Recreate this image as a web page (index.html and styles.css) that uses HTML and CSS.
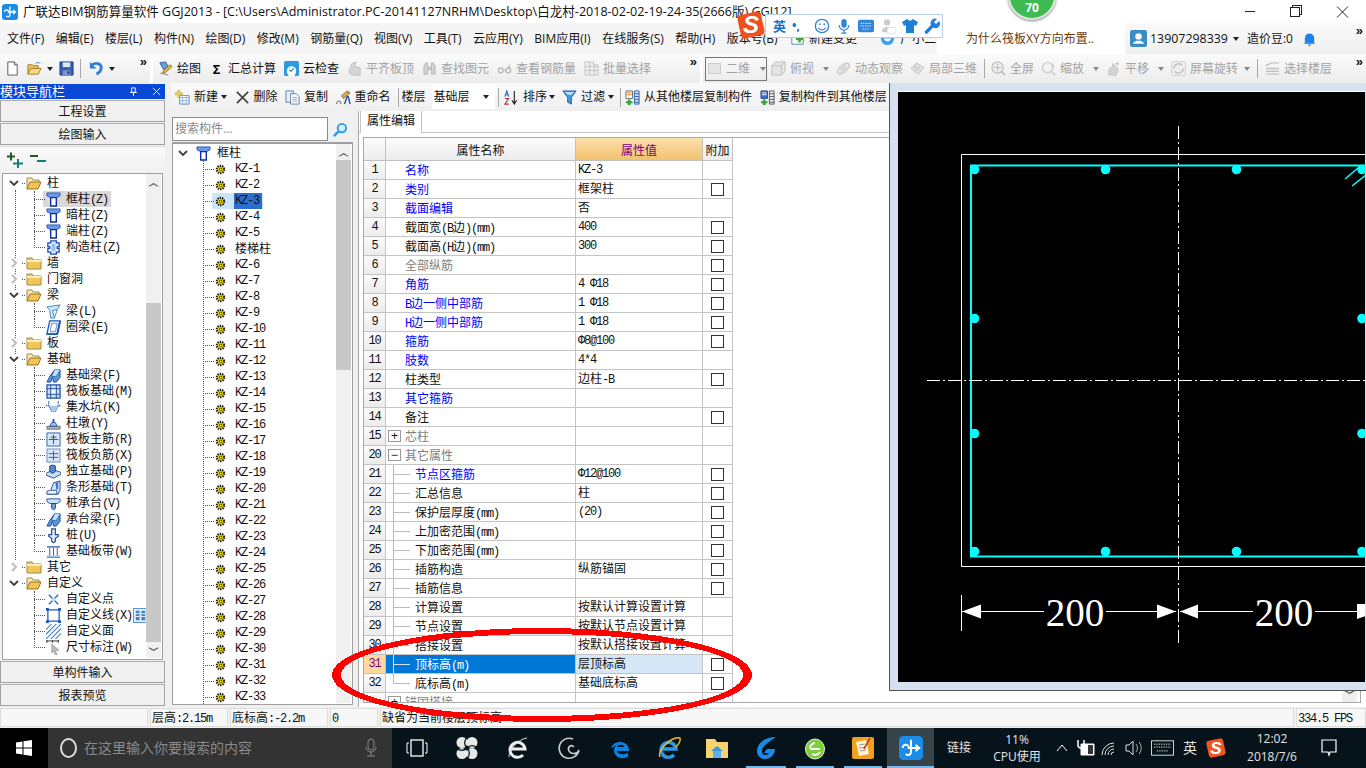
FILE: index.html
```html
<!DOCTYPE html>
<html lang="zh-CN">
<head>
<meta charset="utf-8">
<title>广联达BIM钢筋算量软件</title>
<link rel="stylesheet" href="styles.css">
</head>
<body>
<svg class="defs" width="0" height="0">
<defs>
<symbol id="logo" viewBox="0 0 16 16"><rect width="16" height="16" rx="3" fill="#1b8de8"/><path d="M8 2.500v8.500a2 2 0 0 1-3.500 1M2.500 8a2 2 0 0 1 2-2.200a2 2 0 0 1 2 2.200h6.500M11 6l2.500 2-2.500 2" fill="none" stroke="#fff" stroke-width="1.300"/></symbol>
<symbol id="doc" viewBox="0 0 16 16"><path d="M3 1h7l3 3v11H3z" fill="#fff" stroke="#555"/><path d="M10 1v3h3" fill="#ddd" stroke="#555"/></symbol>
<symbol id="open" viewBox="0 0 16 16"><path d="M1 14V4h5l1 1h5v3" fill="#e8c265" stroke="#a67c20"/><path d="M1 14l3-6h11l-3 6z" fill="#f6d98a" stroke="#a67c20"/><path d="M9 3c2-2 4-2 5 0" fill="none" stroke="#3a7bd5"/></symbol>
<symbol id="save" viewBox="0 0 16 16"><path d="M1 1h14v14H1z" fill="#3a5fb0" stroke="#23407f"/><path d="M4 1.500h8v5H4z" fill="#dfe8f6"/><path d="M4 10h8v5H4z" fill="#7f96c8"/><path d="M9 11h2v3H9z" fill="#23407f"/></symbol>
<symbol id="undo" viewBox="0 0 16 16"><path d="M3 4c5-3 11-1 10 4-.5 3-3 5-5 6" fill="none" stroke="#2f7fd6" stroke-width="3"/><path d="M1 1v7h7z" fill="#2f7fd6"/></symbol>
<symbol id="draw" viewBox="0 0 16 16"><path d="M2 2l6-1 3 5-5 3z" fill="#6aa0e0" stroke="#2b5ca8"/><path d="M6 10l7-6 2 2-7 6-3 1z" fill="#f0c040" stroke="#8a6a10"/><path d="M2 13l9 2" stroke="#888"/></symbol>
<symbol id="cloud" viewBox="0 0 16 16"><rect width="16" height="16" rx="2" fill="#2d9ae0"/><path d="M3 10a5 4.500 0 0 1 10 0 2 3 0 0 1-10 0" fill="#fff"/><path d="M5.500 9.500l2 1.500 3-3" fill="none" stroke="#2d9ae0" stroke-width="1.400"/></symbol>
<symbol id="g1" viewBox="0 0 16 16"><path d="M2 12l3-9 5-2-2 5 6 1v8H5z" fill="#d6d6d6" stroke="#bdbdbd"/></symbol>
<symbol id="binoc" viewBox="0 0 16 16"><path d="M2 14V6l2-4h2v12zM10 14V2h2l2 4v8z" fill="#d2d2d2" stroke="#b5b5b5"/><path d="M6 6h4v4H6z" fill="#c0c0c0"/></symbol>
<symbol id="glass" viewBox="0 0 16 16"><circle cx="4" cy="10" r="2.500" fill="none" stroke="#bbb" stroke-width="1.500"/><circle cx="12" cy="10" r="2.500" fill="none" stroke="#bbb" stroke-width="1.500"/><path d="M6.500 10h3M13 8V4" stroke="#bbb" stroke-width="1.500"/></symbol>
<symbol id="batch" viewBox="0 0 16 16"><path d="M1 1h9v3h5v11H1z" fill="#eee" stroke="#c4c4c4"/><path d="M1 6h14M1 10h14M6 1v14M11 4v11" stroke="#c4c4c4"/></symbol>
<symbol id="cube" viewBox="0 0 16 16"><path d="M1 5l4-4h10v10l-4 4H1z" fill="#e6e6e6" stroke="#bdbdbd"/><path d="M1 5h10v10M11 5l4-4" fill="none" stroke="#bdbdbd"/></symbol>
<symbol id="orbit" viewBox="0 0 16 16"><ellipse cx="8" cy="8" rx="7.500" ry="3.500" transform="rotate(-40 8 8)" fill="none" stroke="#cfcfcf" stroke-width="2"/><circle cx="8" cy="8" r="4" fill="#d8d8d8"/></symbol>
<symbol id="part3d" viewBox="0 0 16 16"><path d="M1 8l6-6 8 5-6 7z" fill="#e2e2e2" stroke="#c5c5c5"/><path d="M4 5l8 6M7 2l-3 9M11 5l-5 7" stroke="#c5c5c5" fill="none"/></symbol>
<symbol id="full" viewBox="0 0 16 16"><circle cx="7" cy="7" r="6" fill="#eee" stroke="#c0c0c0" stroke-width="1.400"/><path d="M7 3v8M3 7h8" stroke="#bdbdbd"/><path d="M11.500 11.500l3.500 3.500" stroke="#c0c0c0" stroke-width="2"/></symbol>
<symbol id="zoom" viewBox="0 0 16 16"><circle cx="7" cy="7" r="5.500" fill="#f2f2f2" stroke="#cfcfcf" stroke-width="1.500"/><path d="M11 11l4 4" stroke="#cfcfcf" stroke-width="2"/><path d="M13 3v4" stroke="#bbb"/></symbol>
<symbol id="pan" viewBox="0 0 16 16"><path d="M3 15V9l2-2 2-1V3l2 1v2l3 1 1 3-2 5z" fill="#d3d3d3" stroke="#c4c4c4"/><path d="M12 1v4M10 3h4" stroke="#bbb"/></symbol>
<symbol id="rot" viewBox="0 0 16 16"><rect x=".5" y=".5" width="15" height="15" rx="2" fill="#eee" stroke="#d2d2d2"/><path d="M3 8a5 5 0 0 1 9-3M13 8a5 5 0 0 1-9 3" fill="none" stroke="#c0c0c0" stroke-width="1.500"/></symbol>
<symbol id="layers" viewBox="0 0 16 16"><path d="M1 5l6-3h8M1 8h14M1 11h14M1 14h14" fill="none" stroke="#c4c4c4" stroke-width="1.500"/></symbol>
<symbol id="new" viewBox="0 0 16 16"><path d="M5 6h10v9H5z" fill="#fff" stroke="#6d86a8"/><path d="M5 8h10M8 8v7M12 8v7M5 11.500h10" stroke="#8fb0d8"/><path d="M3 0h2v3h3v2H5v3H3V5H0V3h3z" fill="#e9d85a" stroke="#a89a20" stroke-width=".5"/></symbol>
<symbol id="del" viewBox="0 0 16 16"><path d="M2 2l12 12M14 2L2 14" stroke="#444" stroke-width="1.800"/></symbol>
<symbol id="copy" viewBox="0 0 16 16"><path d="M1 1h8v12H1z" fill="#e8f0fa" stroke="#5a7fb0"/><path d="M6 4h6l3 3v8H6z" fill="#fff" stroke="#5a7fb0"/><path d="M8 8h5M8 10h5M8 12h5" stroke="#8aa6cc"/></symbol>
<symbol id="rename" viewBox="0 0 16 16"><path d="M6 6l6-5 3 2-7 6z" fill="#d8b04c" stroke="#8a6a10"/><path d="M9 15l3-8h1l2 8" fill="none" stroke="#2a57a8" stroke-width="1.600"/><path d="M1 15a2 2 0 1 1 4-2v2" fill="none" stroke="#555"/></symbol>
<symbol id="sort" viewBox="0 0 16 16"><path d="M1 7l2-6 2 6M2 5h2" fill="none" stroke="#3060c0" stroke-width="1.200"/><path d="M1 9h4l-4 6h4" fill="none" stroke="#b03030" stroke-width="1.200"/><path d="M11 1v13M8.500 11l2.500 4 2.500-4" fill="none" stroke="#222" stroke-width="1.200"/></symbol>
<symbol id="funnel" viewBox="0 0 16 16"><path d="M1 1h14L10 8v7l-4-2V8z" fill="#3f9ae8" stroke="#1a64b0"/><path d="M3 2h10l-3 3H6z" fill="#bfe0fa"/></symbol>
<symbol id="fromf" viewBox="0 0 16 16"><path d="M1 1h7v8H1z" fill="#fff" stroke="#666"/><path d="M2 3h5M2 5h5" stroke="#e08020"/><path d="M10 1h5v14h-5z" fill="#cfe0f5" stroke="#2a60b0"/><path d="M10 4h5M10 7h5M10 10h5M10 13h5" stroke="#2a60b0"/><path d="M3 10h3v2h2v2H6v2H3v-2H1v-2h2z" fill="#3aa03a"/></symbol>
<symbol id="tof" viewBox="0 0 16 16"><path d="M1 1h7v8H1z" fill="#3a70d0" stroke="#234a90"/><path d="M2 3h5M2 5h5" stroke="#fff"/><path d="M10 1h5v14h-5z" fill="#eee" stroke="#555"/><path d="M10 4h5M10 7h5M10 10h5M10 13h5" stroke="#555"/><path d="M3 10h3v2h2v2H6v2H3v-2H1v-2h2z" fill="#3aa03a"/></symbol>
<symbol id="mag" viewBox="0 0 16 16"><circle cx="9.500" cy="6.500" r="4.500" fill="#d9eefb" stroke="#2f9ae4" stroke-width="2"/><path d="M6 10l-5 5" stroke="#2f9ae4" stroke-width="2.600"/></symbol>
<symbol id="plusplus" viewBox="0 0 16 16"><path d="M0 4.500h8M4 .5v8" stroke="#1e5a20" stroke-width="2"/><path d="M6 11.500h10M11 7v9" stroke="#12807a" stroke-width="2"/></symbol>
<symbol id="minusminus" viewBox="0 0 16 16"><path d="M0 4h8" stroke="#1e5a20" stroke-width="2"/><path d="M7 9h9" stroke="#12807a" stroke-width="2"/></symbol>
<symbol id="cdown" viewBox="0 0 10 10"><path d="M1 3l4 4 4-4" fill="none" stroke="#404040" stroke-width="1.800"/></symbol>
<symbol id="cright" viewBox="0 0 10 10"><path d="M3 1l4 4-4 4" fill="none" stroke="#bcbcbc" stroke-width="1.800"/></symbol>
<symbol id="fo" viewBox="0 0 16 14"><path d="M1 13V2h5l1 2h6v2" fill="#f6e7b8" stroke="#9c8a56"/><path d="M1 13l3-7h11l-3 7z" fill="#f3c455" stroke="#9c7a26"/></symbol>
<symbol id="fc" viewBox="0 0 16 14"><path d="M1 13V2h5l1 2h8v9z" fill="#f3c658" stroke="#a08a50"/><path d="M1 4h14v2H1z" fill="#fdeeb8"/></symbol>
<symbol id="col" viewBox="0 0 16 16"><path d="M1 1h14v3l-4 2H5L1 4z" fill="#6b9ae6" stroke="#2c58b8"/><path d="M5 6h6v9H5z" fill="#fff" stroke="#0b2f9e" stroke-width="1.500"/></symbol>
<symbol id="gz" viewBox="0 0 16 16"><path d="M5 1h6v2h3v4h-2v2h2v4h-3v2H5v-2H2V9h2V7H2V3h3z" fill="#e8f0fb" stroke="#1f4fb0" stroke-width="1.400"/><path d="M6 4h4v8H6z" fill="#9cbcec"/></symbol>
<symbol id="beam" viewBox="0 0 16 16"><path d="M1 3l14-2-3 5-5 1 2 8H5L4 7z" fill="#cfe4f8" stroke="#3a8ac8"/><path d="M9 15l3-9" stroke="#3a8ac8"/></symbol>
<symbol id="ring" viewBox="0 0 16 16"><path d="M4 1h11l-3 14H1z" fill="#fff" stroke="#1a55b8" stroke-width="1.400"/><path d="M6 3.500h6l-2 9H4.500z" fill="#fff" stroke="#5d8ad0"/><path d="M1 15h11l3-14" fill="none" stroke="#1a55b8" stroke-width="2"/></symbol>
<symbol id="fbeam" viewBox="0 0 16 16"><path d="M1 15l3-6 5-7h6v8l-4 5H8l-1-5-2 5z" fill="#5a96d8" stroke="#1f4fa0"/><path d="M9 2l-3 7h5l4-7" fill="#c6e0f8" stroke="#1f4fa0" stroke-width=".7"/></symbol>
<symbol id="raft" viewBox="0 0 16 16"><path d="M1 1h14v14H1z" fill="#cfe0f5" stroke="#1f4fa0" stroke-width="1.300"/><path d="M1 5h14M1 11h14M5 1v14M11 1v14" stroke="#1f4fa0"/><path d="M6 6h4v4H6z" fill="#fff"/></symbol>
<symbol id="pit" viewBox="0 0 16 16"><path d="M0 6h3l3 6h4l3-6h3" fill="none" stroke="#2a68b8" stroke-width="1.300" stroke-dasharray="1.500 .6"/><path d="M4 6h8l-2 6H6z" fill="#a8c8ee"/><path d="M3 1v4M13 1v4" stroke="#2a68b8"/></symbol>
<symbol id="pier" viewBox="0 0 16 16"><path d="M1 11h14v3H1z" fill="#b8b8b8" stroke="#666"/><path d="M4 11l2-4h4l2 4z" fill="#9ec0ec" stroke="#2a58a8"/><path d="M7 3h2v4H7z" fill="#2a58a8"/></symbol>
<symbol id="mainr" viewBox="0 0 16 16"><path d="M1 1h14v14H1z" fill="#d7e6f8" stroke="#2a60b0"/><path d="M8 3v10M3 8h10M5 5.500h6" stroke="#1f4fa0"/></symbol>
<symbol id="negr" viewBox="0 0 16 16"><path d="M1 1h14v14H1z" fill="#d7e6f8" stroke="#6a8ac0"/><path d="M8 3v10M3 6h10M3 10h10" stroke="#2f5fa8"/></symbol>
<symbol id="ind" viewBox="0 0 16 16"><path d="M0 10l8-4 8 3v2l-8 4-8-3z" fill="#c9dff6" stroke="#1f4fa0"/><path d="M4 8V2l3-1 3 1v6l-3 2z" fill="#5888c8" stroke="#17408c"/></symbol>
<symbol id="strip" viewBox="0 0 16 16"><path d="M1 15v-3l4-1 3-8 7-2v10l-2 4z" fill="#d5e6f8" stroke="#1f4fa0"/><path d="M5 11h6l1 4H1" fill="#fff" stroke="#1f4fa0"/><path d="M10 3l3-1v8h-2z" fill="#3f74c0"/></symbol>
<symbol id="cap" viewBox="0 0 16 16"><path d="M1 3h14v3l-3 2H4L1 6z" fill="#cfe0f5" stroke="#2a58a8"/><path d="M6 8h4v5l-2 2-2-2z" fill="#7ba4dc" stroke="#17408c"/></symbol>
<symbol id="pile" viewBox="0 0 16 16"><path d="M6 1h4v6h3v2l-3 2v3l-2 2-2-2v-3L3 9V7h3z" fill="#e2ecf9" stroke="#1f4fa0" stroke-width="1.300"/></symbol>
<symbol id="band" viewBox="0 0 16 16"><path d="M1 3h14M1 14h14" stroke="#2a58a8" stroke-width="1.400"/><path d="M4 4v9M8 4v9M12 4v9" stroke="#2a58a8"/><path d="M1 12h14v2H1z" fill="#a8c6ec"/></symbol>
<symbol id="cpt" viewBox="0 0 16 16"><path d="M3 3l10 10M13 3L3 13" stroke="#2a68b8" stroke-width="1.400"/><circle cx="8" cy="8" r="2" fill="#bcd6f2"/></symbol>
<symbol id="cline" viewBox="0 0 16 16"><rect x="2" y="2" width="12" height="12" fill="none" stroke="#1a55b8" stroke-width="1.300"/><path d="M0 0h3v3H0zM13 0h3v3h-3zM0 13h3v3H0zM13 13h3v3h-3z" fill="#1a55b8"/></symbol>
<symbol id="hatch" viewBox="0 0 16 16"><path d="M0 6l6-6M0 11L11 0M0 16L16 0M5 16L16 5M10 16l6-6" stroke="#3a78d0" stroke-width="1.100"/></symbol>
<symbol id="dimi" viewBox="0 0 16 16"><path d="M0 1h14M1 0v3M7 0v3M13 0v3" stroke="#333"/><path d="M6 4l8 7-4 .5 2 4-2 .5-2-4-2 2z" fill="#b8b8b8" stroke="#888" stroke-width=".5"/></symbol>
<symbol id="cols" viewBox="0 0 16 16"><rect x=".5" y=".5" width="15" height="15" fill="#e3effb" stroke="#5a90d0"/><path d="M3 3h4v10H3zM9 3h4v10H9z" fill="#3b82d6"/><path d="M3 6h4M3 9h4M9 6h4M9 9h4" stroke="#fff"/></symbol>
<symbol id="gear" viewBox="0 0 12 12"><circle cx="6" cy="6" r="4" fill="#ffef00" stroke="#1a1a1a" stroke-width="2.400" stroke-dasharray="1.500 1"/><circle cx="6" cy="6" r="1.500" fill="none" stroke="#333"/></symbol>
<symbol id="chg" viewBox="0 0 16 16"><path d="M1 1v14h14V8" fill="#fff" stroke="#3a70c8"/><path d="M6 7h3V4h3v3h3v3h-3v3H9v-3H6z" fill="#44a63c"/></symbol>
<symbol id="xiao" viewBox="0 0 16 16"><circle cx="8" cy="8" r="7" fill="#3da0e8"/><path d="M4 8c1 4 7 4 8 0z" fill="#fff"/></symbol>
<symbol id="user" viewBox="0 0 16 16"><rect width="16" height="16" rx="2" fill="#3a8bc8"/><circle cx="8" cy="6" r="3" fill="#fff"/><path d="M3 13h10v-1l-3-2H6l-3 2z" fill="#fff"/></symbol>
<symbol id="bell" viewBox="0 0 14 16"><path d="M2 12V7a5 5 0 0 1 10 0v5l1.500 1H.5z" fill="#1e82ec"/><path d="M5 14h4l-2 2z" fill="#1e82ec"/></symbol>
<symbol id="win" viewBox="0 0 16 16"><path d="M0 2.500l6.500-1v6H0zM7.500 1.300L16 0v7.500H7.500zM0 8.500h6.500v6L0 13.500zM7.500 8.500H16V16l-8.500-1.200z" fill="#fff"/></symbol>
<symbol id="tasks" viewBox="0 0 22 18"><rect x="5" y="1" width="12" height="16" fill="none" stroke="#fff" stroke-width="1.300"/><path d="M3 4H1v10h2M19 4h2v10h-2" fill="none" stroke="#fff"/></symbol>
<symbol id="fan" viewBox="0 0 24 24"><ellipse cx="7" cy="6.500" rx="5.500" ry="5.500" fill="#e8e8e8"/><ellipse cx="17" cy="6.500" rx="5.500" ry="5.500" fill="#e8e8e8"/><ellipse cx="7" cy="17.500" rx="5.500" ry="5.500" fill="#e8e8e8"/><ellipse cx="17" cy="17.500" rx="5.500" ry="5.500" fill="#e8e8e8"/><path d="M12 12C9 9 9 5 12 1M12 12c3 3 3 7 0 11M12 12c3-3 7-3 11 0M12 12c-3 3-7 3-11 0" fill="none" stroke="#06131a" stroke-width="1.200"/></symbol>
<symbol id="ie" viewBox="0 0 24 24"><path d="M4 13h15a7.500 7.500 0 1 0-2 6" fill="none" stroke="#eee" stroke-width="3"/><path d="M3 21C2 15 12 3 21 2" fill="none" stroke="#ddd"/></symbol>
<symbol id="swirl" viewBox="0 0 24 24"><path d="M16 3a10 10 0 1 0 6 11c-1 4-8 5-10 1s2-7 5-4" fill="none" stroke="#ccc" stroke-width="1.600"/></symbol>
<symbol id="edge" viewBox="0 0 24 24"><path d="M3 12a9.500 9.500 0 0 1 18 1v2H9c1 4 7 4 11 2v4c-7 3-14 0-14-7 0-2 1-4 3-5-3 1-5 3-6 3zM9 11h7c0-3-6-3-7 0z" fill="#0a84e4"/></symbol>
<symbol id="ie2" viewBox="0 0 24 24"><path d="M4 13h15a7.500 7.500 0 1 0-2 6" fill="none" stroke="#2a9ae8" stroke-width="3.400"/><path d="M3 21C0 15 14 0 23 2c1 4-3 8-4 9" fill="none" stroke="#f0c020" stroke-width="1.400"/></symbol>
<symbol id="folder" viewBox="0 0 24 24"><path d="M1 3h9l2 3h11v16H1z" fill="#f6d36b"/><path d="M8 14h8v8H8z" fill="#5ab0e8"/><path d="M6 15l6-5 6 5z" fill="#3f98d8"/></symbol>
<symbol id="glodon" viewBox="0 0 24 24"><path d="M22 1c-12 0-19 7-19 14 0 5 4 8 8 8 6 0 10-5 10-10h-8l-3 4h5c-1 2-3 2-4 2-2 0-3-2-3-4 0-5 7-9 14-14z" fill="#1a8ae8"/></symbol>
<symbol id="gball" viewBox="0 0 24 24"><ellipse cx="12" cy="13" rx="9.500" ry="10" fill="#7ccf3a" stroke="#e8f4e0"/><path d="M7 13h10M12 7a6 6 0 0 0-5 5M17 16a6 6 0 0 1-8 2" stroke="#fff" stroke-width="1.800" fill="none"/></symbol>
<symbol id="note" viewBox="0 0 24 24"><rect x="1" y="1" width="22" height="22" rx="2" fill="#f0a020"/><path d="M5 6l10-2 3 14-10 2z" fill="#fdf3d0"/><path d="M8 9l6-1M8 12l7-1M9 15l6-1" stroke="#999"/><path d="M19 2l-6 11" stroke="#b03010" stroke-width="1.500"/></symbol>
<symbol id="wifi" viewBox="0 0 20 18"><path d="M2 16a12 12 0 0 1 12-12M5 16a9 9 0 0 1 9-9M8 16a6 6 0 0 1 6-6M11 16a3 3 0 0 1 3-3" fill="none" stroke="#ddd"/></symbol>
<symbol id="batt" viewBox="0 0 20 18"><path d="M5 5h13v11H5z" fill="#fff" stroke="#fff"/><path d="M12 6h5v9h-5z" fill="#333"/><path d="M2 1v5a3 3 0 0 0 6 0V1" fill="none" stroke="#fff" stroke-width="1.500"/></symbol>
<symbol id="vol" viewBox="0 0 20 18"><path d="M2 6h3l4-4v14l-4-4H2z" fill="none" stroke="#ddd"/><path d="M12 5a6 6 0 0 1 0 8M15 3a9 9 0 0 1 0 12" fill="none" stroke="#aaa"/></symbol>
<symbol id="kbd" viewBox="0 0 24 16"><rect x=".5" y=".5" width="23" height="15" fill="none" stroke="#ddd"/><path d="M3 4h18M3 7h18M6 11h12" stroke="#ddd" stroke-dasharray="1.500 1"/></symbol>
<symbol id="notif" viewBox="0 0 16 18"><path d="M1 1h14v12H9l-1 3-1-3H1z" fill="none" stroke="#fff" stroke-width="1.200"/></symbol>
<symbol id="micg" viewBox="0 0 14 20"><rect x="4" y="1" width="6" height="11" rx="3" fill="none" stroke="#888"/><path d="M2 9a5 5 0 0 0 10 0M7 14v4M3 18h8" fill="none" stroke="#888"/></symbol>
<symbol id="smile" viewBox="0 0 18 18"><circle cx="9" cy="9" r="7.500" fill="none" stroke="#2f86d8" stroke-width="1.500"/><circle cx="6.500" cy="7" r="1" fill="#2f86d8"/><circle cx="11.500" cy="7" r="1" fill="#2f86d8"/><path d="M5 11a4.500 4.500 0 0 0 8 0" fill="none" stroke="#2f86d8" stroke-width="1.300"/></symbol>
<symbol id="micb" viewBox="0 0 14 18"><rect x="4" y="1" width="6" height="10" rx="3" fill="#2f86d8"/><path d="M1.500 8a5.500 5.500 0 0 0 11 0M7 14v3M4 17h6" fill="none" stroke="#2f86d8" stroke-width="1.400"/></symbol>
<symbol id="kbb" viewBox="0 0 18 14"><rect width="18" height="14" rx="2" fill="#2f86d8"/><path d="M3 4h12M3 7h12M5 10.500h8" stroke="#fff" stroke-dasharray="1.500 1"/></symbol>
<symbol id="pers" viewBox="0 0 18 18"><circle cx="8" cy="5" r="3.500" fill="#c8ccd0"/><path d="M2 16c0-8 12-8 12 0z" fill="#c8ccd0"/><rect x="8" y="11" width="10" height="6" fill="#fff" stroke="#c8ccd0" stroke-width=".6"/></symbol>
<symbol id="shirt" viewBox="0 0 16 16"><path d="M5 1L0 4l2 4 2-1v8h8V7l2 1 2-4-5-3-3 2z" fill="#1e7fd8"/></symbol>
<symbol id="wrench" viewBox="0 0 16 16"><path d="M15 3l-3 3-2-2 3-3a4.500 4.500 0 0 0-6 6L1 13a1.800 1.800 0 0 0 2.500 2.500L9 9.500a4.500 4.500 0 0 0 6-6.500z" fill="#1e7fd8"/></symbol>
</defs>
</svg>

<div class="app">
  <header class="title">
    <svg class="tlogo"><use href="#logo"/></svg>
    <span class="ttext">广联达BIM钢筋算量软件 GGJ2013 - [C:\Users\Administrator.PC-20141127NRHM\Desktop\白龙村-2018-02-02-19-24-35(2666版).GGJ12]</span>
    <div class="wbtns">
      <span class="wmin"></span><span class="wmax"></span>
      <svg class="wclose" viewBox="0 0 12 12"><path d="M.5.500l11 11M11.500.500l-11 11" stroke="#222"/></svg>
    </div>
  </header>

  <nav class="menu">
    <div class="menu-l">
      <span>文件(F)</span><span>编辑(E)</span><span>楼层(L)</span><span>构件(N)</span><span>绘图(D)</span><span>修改(M)</span><span>钢筋量(Q)</span><span>视图(V)</span><span>工具(T)</span><span>云应用(Y)</span><span>BIM应用(I)</span><span>在线服务(S)</span><span>帮助(H)</span><span>版本号(B)</span>
      <svg class="ic mchg"><use href="#chg"/></svg><span class="mchgt">新建变更</span>
      <svg class="ic mxiao"><use href="#xiao"/></svg><span class="mxiaot">广小二</span>
    </div>
    <div class="menu-news">为什么筏板XY方向布置..</div>
    <div class="menu-user">
      <svg class="ic uic"><use href="#user"/></svg><span class="phone">13907298339</span><i class="dd dk"></i><span class="bean">造价豆:0</span>
      <svg class="bell"><use href="#bell"/></svg><span class="more mu">»</span>
    </div>
  </nav>

  <div class="tbar">
    <div class="seg sega">
      <svg class="ic"><use href="#doc"/></svg>
      <svg class="ic a1"><use href="#open"/></svg><i class="dd dk"></i>
      <svg class="ic a2"><use href="#save"/></svg><i class="vsep a3"></i>
      <svg class="ic a4"><use href="#undo"/></svg><i class="dd dk"></i>
      <span class="more">»</span>
    </div>
    <div class="seg segb">
      <span class="it"><svg class="ic"><use href="#draw"/></svg>绘图</span>
      <span class="it"><b class="sigma">Σ</b>汇总计算</span>
      <span class="it"><svg class="ic"><use href="#cloud"/></svg>云检查</span>
      <span class="it off"><svg class="ic"><use href="#g1"/></svg>平齐板顶</span>
      <span class="it off"><svg class="ic"><use href="#binoc"/></svg>查找图元</span>
      <span class="it off"><svg class="ic"><use href="#glass"/></svg>查看钢筋量</span>
      <span class="it off"><svg class="ic"><use href="#batch"/></svg>批量选择</span>
      <span class="more">»</span>
    </div>
    <div class="seg segc">
      <span class="combo off"><i class="combo-sw"></i>二维<i class="dd"></i></span>
      <span class="it off"><svg class="ic"><use href="#cube"/></svg>俯视<i class="dd"></i></span>
      <span class="it off"><svg class="ic"><use href="#orbit"/></svg>动态观察</span>
      <span class="it off"><svg class="ic"><use href="#part3d"/></svg>局部三维</span>
      <i class="vsep vs-r"></i>
      <span class="it off"><svg class="ic"><use href="#full"/></svg>全屏</span>
      <span class="it off"><svg class="ic"><use href="#zoom"/></svg>缩放<i class="dd"></i></span>
      <span class="it off"><svg class="ic"><use href="#pan"/></svg>平移<i class="dd"></i></span>
      <span class="it off"><svg class="ic"><use href="#rot"/></svg>屏幕旋转<i class="dd dn"></i></span>
      <i class="vsep"></i>
      <span class="it off"><svg class="ic"><use href="#layers"/></svg>选择楼层</span>
      <span class="more">»</span>
    </div>
  </div>

  <main class="main">
    <aside class="nav">
      <div class="navhead"><span>模块导航栏</span><span class="navpin">
        <svg class="pin" viewBox="0 0 10 10"><path d="M3 1h4v5H3zM1 6h8M5 6v4" fill="none" stroke="#fff"/></svg>
        <svg class="pin" viewBox="0 0 10 10"><path d="M1 1l8 8M9 1L1 9" stroke="#fff"/></svg></span></div>
      <div class="navbtn">工程设置</div>
      <div class="navbtn">绘图输入</div>
      <div class="navtools">
        <svg class="ic"><use href="#plusplus"/></svg>
        <svg class="ic"><use href="#minusminus"/></svg>
      </div>
      <div class="navtree">
        <div class="navlist">
          <div class="r"><svg class="chev"><use href="#cdown"/></svg><svg class="folder"><use href="#fo"/></svg><span>柱</span></div>
          <div class="c sel"><svg class="ic"><use href="#col"/></svg><span>框柱<i class="m">(Z)</i></span></div>
          <div class="c"><svg class="ic"><use href="#col"/></svg><span>暗柱<i class="m">(Z)</i></span></div>
          <div class="c"><svg class="ic"><use href="#col"/></svg><span>端柱<i class="m">(Z)</i></span></div>
          <div class="c last"><svg class="ic"><use href="#gz"/></svg><span>构造柱<i class="m">(Z)</i></span></div>
          <div class="r"><svg class="chev"><use href="#cright"/></svg><svg class="folder"><use href="#fc"/></svg><span>墙</span></div>
          <div class="r"><svg class="chev"><use href="#cright"/></svg><svg class="folder"><use href="#fc"/></svg><span>门窗洞</span></div>
          <div class="r"><svg class="chev"><use href="#cdown"/></svg><svg class="folder"><use href="#fo"/></svg><span>梁</span></div>
          <div class="c"><svg class="ic"><use href="#beam"/></svg><span>梁<i class="m">(L)</i></span></div>
          <div class="c last"><svg class="ic"><use href="#ring"/></svg><span>圈梁<i class="m">(E)</i></span></div>
          <div class="r"><svg class="chev"><use href="#cright"/></svg><svg class="folder"><use href="#fc"/></svg><span>板</span></div>
          <div class="r"><svg class="chev"><use href="#cdown"/></svg><svg class="folder"><use href="#fo"/></svg><span>基础</span></div>
          <div class="c"><svg class="ic"><use href="#fbeam"/></svg><span>基础梁<i class="m">(F)</i></span></div>
          <div class="c"><svg class="ic"><use href="#raft"/></svg><span>筏板基础<i class="m">(M)</i></span></div>
          <div class="c"><svg class="ic"><use href="#pit"/></svg><span>集水坑<i class="m">(K)</i></span></div>
          <div class="c"><svg class="ic"><use href="#pier"/></svg><span>柱墩<i class="m">(Y)</i></span></div>
          <div class="c"><svg class="ic"><use href="#mainr"/></svg><span>筏板主筋<i class="m">(R)</i></span></div>
          <div class="c"><svg class="ic"><use href="#negr"/></svg><span>筏板负筋<i class="m">(X)</i></span></div>
          <div class="c"><svg class="ic"><use href="#ind"/></svg><span>独立基础<i class="m">(P)</i></span></div>
          <div class="c"><svg class="ic"><use href="#strip"/></svg><span>条形基础<i class="m">(T)</i></span></div>
          <div class="c"><svg class="ic"><use href="#cap"/></svg><span>桩承台<i class="m">(V)</i></span></div>
          <div class="c"><svg class="ic"><use href="#fbeam"/></svg><span>承台梁<i class="m">(F)</i></span></div>
          <div class="c"><svg class="ic"><use href="#pile"/></svg><span>桩<i class="m">(U)</i></span></div>
          <div class="c last"><svg class="ic"><use href="#band"/></svg><span>基础板带<i class="m">(W)</i></span></div>
          <div class="r"><svg class="chev"><use href="#cright"/></svg><svg class="folder"><use href="#fc"/></svg><span>其它</span></div>
          <div class="r nog"><svg class="chev"><use href="#cdown"/></svg><svg class="folder"><use href="#fo"/></svg><span>自定义</span></div>
          <div class="c"><svg class="ic"><use href="#cpt"/></svg><span>自定义点</span></div>
          <div class="c"><svg class="ic"><use href="#cline"/></svg><span>自定义线<i class="m">(X)</i></span><svg class="ic colsic"><use href="#cols"/></svg></div>
          <div class="c"><svg class="ic"><use href="#hatch"/></svg><span>自定义面</span></div>
          <div class="c last"><svg class="ic"><use href="#dimi"/></svg><span>尺寸标注<i class="m">(W)</i></span></div>
        </div>
        <div class="sbar">
          <div class="sb-arrow">︿</div><div class="sb-light sb-nav-a"></div><div class="sb-thumb sb-grow"></div><div class="sb-arrow sb-down">﹀</div>
        </div>
      </div>
      <div class="navbtn nb2">单构件输入</div>
      <div class="navbtn">报表预览</div>
    </aside>

    <section class="work">
      <div class="tbar2">
        <span class="it"><svg class="ic"><use href="#new"/></svg>新建<i class="dd dk dsm"></i></span>
        <span class="it"><svg class="ic"><use href="#del"/></svg>删除</span>
        <span class="it"><svg class="ic"><use href="#copy"/></svg>复制</span>
        <span class="it"><svg class="ic"><use href="#rename"/></svg>重命名</span>
        <i class="vsep"></i>
        <span class="floor">楼层</span>
        <span class="fbox">基础层<i class="dd dk"></i></span>
        <i class="vsep vs-b"></i>
        <span class="it"><svg class="ic"><use href="#sort"/></svg>排序<i class="dd dk dsm2"></i></span>
        <span class="it"><svg class="ic"><use href="#funnel"/></svg>过滤<i class="dd dk dsm"></i></span>
        <i class="vsep vs-c"></i>
        <span class="it"><svg class="ic"><use href="#fromf"/></svg>从其他楼层复制构件</span>
        <span class="it"><svg class="ic"><use href="#tof"/></svg>复制构件到其他楼层</span>
      </div>
      <div class="workbody">
        <div class="comp">
          <div class="search"><span class="sbox">搜索构件...</span><svg class="ic smag"><use href="#mag"/></svg></div>
          <div class="ctree">
            <div class="clist">
              <div class="croot"><svg class="chev"><use href="#cdown"/></svg><svg class="ic"><use href="#col"/></svg><span>框柱</span></div>
              <div class="k"><svg class="gear"><use href="#gear"/></svg><span class="kt m">KZ-1</span></div>
              <div class="k"><svg class="gear"><use href="#gear"/></svg><span class="kt m">KZ-2</span></div>
              <div class="k ksel"><svg class="gear"><use href="#gear"/></svg><span class="kt m">KZ-3</span></div>
              <div class="k"><svg class="gear"><use href="#gear"/></svg><span class="kt m">KZ-4</span></div>
              <div class="k"><svg class="gear"><use href="#gear"/></svg><span class="kt m">KZ-5</span></div>
              <div class="k"><svg class="gear"><use href="#gear"/></svg><span class="kt">楼梯柱</span></div>
              <div class="k"><svg class="gear"><use href="#gear"/></svg><span class="kt m">KZ-6</span></div>
              <div class="k"><svg class="gear"><use href="#gear"/></svg><span class="kt m">KZ-7</span></div>
              <div class="k"><svg class="gear"><use href="#gear"/></svg><span class="kt m">KZ-8</span></div>
              <div class="k"><svg class="gear"><use href="#gear"/></svg><span class="kt m">KZ-9</span></div>
              <div class="k"><svg class="gear"><use href="#gear"/></svg><span class="kt m">KZ-10</span></div>
              <div class="k"><svg class="gear"><use href="#gear"/></svg><span class="kt m">KZ-11</span></div>
              <div class="k"><svg class="gear"><use href="#gear"/></svg><span class="kt m">KZ-12</span></div>
              <div class="k"><svg class="gear"><use href="#gear"/></svg><span class="kt m">KZ-13</span></div>
              <div class="k"><svg class="gear"><use href="#gear"/></svg><span class="kt m">KZ-14</span></div>
              <div class="k"><svg class="gear"><use href="#gear"/></svg><span class="kt m">KZ-15</span></div>
              <div class="k"><svg class="gear"><use href="#gear"/></svg><span class="kt m">KZ-16</span></div>
              <div class="k"><svg class="gear"><use href="#gear"/></svg><span class="kt m">KZ-17</span></div>
              <div class="k"><svg class="gear"><use href="#gear"/></svg><span class="kt m">KZ-18</span></div>
              <div class="k"><svg class="gear"><use href="#gear"/></svg><span class="kt m">KZ-19</span></div>
              <div class="k"><svg class="gear"><use href="#gear"/></svg><span class="kt m">KZ-20</span></div>
              <div class="k"><svg class="gear"><use href="#gear"/></svg><span class="kt m">KZ-21</span></div>
              <div class="k"><svg class="gear"><use href="#gear"/></svg><span class="kt m">KZ-22</span></div>
              <div class="k"><svg class="gear"><use href="#gear"/></svg><span class="kt m">KZ-23</span></div>
              <div class="k"><svg class="gear"><use href="#gear"/></svg><span class="kt m">KZ-24</span></div>
              <div class="k"><svg class="gear"><use href="#gear"/></svg><span class="kt m">KZ-25</span></div>
              <div class="k"><svg class="gear"><use href="#gear"/></svg><span class="kt m">KZ-26</span></div>
              <div class="k"><svg class="gear"><use href="#gear"/></svg><span class="kt m">KZ-27</span></div>
              <div class="k"><svg class="gear"><use href="#gear"/></svg><span class="kt m">KZ-28</span></div>
              <div class="k"><svg class="gear"><use href="#gear"/></svg><span class="kt m">KZ-29</span></div>
              <div class="k"><svg class="gear"><use href="#gear"/></svg><span class="kt m">KZ-30</span></div>
              <div class="k"><svg class="gear"><use href="#gear"/></svg><span class="kt m">KZ-31</span></div>
              <div class="k"><svg class="gear"><use href="#gear"/></svg><span class="kt m">KZ-32</span></div>
              <div class="k"><svg class="gear"><use href="#gear"/></svg><span class="kt m">KZ-33</span></div>
            </div>
            <div class="sbar">
              <div class="sb-arrow">︿</div><div class="sb-thumb sb-comp-t"></div><div class="sb-light sb-grow"></div>
            </div>
          </div>
        </div>
        <div class="props">
          <div class="tabs"><span class="tab">属性编辑</span></div>
          <div class="grid">
            <table class="pt">
              <colgroup><col class="c1"><col class="c2"><col class="c3"><col class="c4"></colgroup>
              <thead><tr><th></th><th>属性名称</th><th class="hval">属性值</th><th>附加</th></tr></thead>
              <tbody>
                <tr><td class="n">1</td><td class="nm b">名称</td><td class="v m">KZ-3</td><td></td></tr>
                <tr><td class="n">2</td><td class="nm b">类别</td><td class="v">框架柱</td><td><i class="cb"></i></td></tr>
                <tr><td class="n">3</td><td class="nm b">截面编辑</td><td class="v">否</td><td></td></tr>
                <tr><td class="n">4</td><td class="nm">截面宽<i class="m">(B</i>边<i class="m">)(mm)</i></td><td class="v m">400</td><td><i class="cb"></i></td></tr>
                <tr><td class="n">5</td><td class="nm">截面高<i class="m">(H</i>边<i class="m">)(mm)</i></td><td class="v m">300</td><td><i class="cb"></i></td></tr>
                <tr><td class="n">6</td><td class="nm g">全部纵筋</td><td class="v"></td><td><i class="cb"></i></td></tr>
                <tr><td class="n">7</td><td class="nm b">角筋</td><td class="v m">4 Φ18</td><td><i class="cb"></i></td></tr>
                <tr><td class="n">8</td><td class="nm b"><i class="m">B</i>边一侧中部筋</td><td class="v m">1 Φ18</td><td><i class="cb"></i></td></tr>
                <tr><td class="n">9</td><td class="nm b"><i class="m">H</i>边一侧中部筋</td><td class="v m">1 Φ18</td><td><i class="cb"></i></td></tr>
                <tr><td class="n">10</td><td class="nm b">箍筋</td><td class="v m">Φ8@100</td><td><i class="cb"></i></td></tr>
                <tr><td class="n">11</td><td class="nm b">肢数</td><td class="v m">4*4</td><td></td></tr>
                <tr><td class="n">12</td><td class="nm">柱类型</td><td class="v">边柱<i class="m">-B</i></td><td><i class="cb"></i></td></tr>
                <tr><td class="n">13</td><td class="nm b">其它箍筋</td><td class="v"></td><td></td></tr>
                <tr><td class="n">14</td><td class="nm">备注</td><td class="v"></td><td><i class="cb"></i></td></tr>
                <tr><td class="n">15</td><td class="nm g"><i class="ex">+</i>芯柱</td><td class="v"></td><td></td></tr>
                <tr><td class="n">20</td><td class="nm g"><i class="ex">−</i>其它属性</td><td class="v"></td><td></td></tr>
                <tr><td class="n">21</td><td class="br b">节点区箍筋</td><td class="v m">Φ12@100</td><td><i class="cb"></i></td></tr>
                <tr><td class="n">22</td><td class="br">汇总信息</td><td class="v">柱</td><td><i class="cb"></i></td></tr>
                <tr><td class="n">23</td><td class="br">保护层厚度<i class="m">(mm)</i></td><td class="v m">(20)</td><td><i class="cb"></i></td></tr>
                <tr><td class="n">24</td><td class="br">上加密范围<i class="m">(mm)</i></td><td class="v"></td><td><i class="cb"></i></td></tr>
                <tr><td class="n">25</td><td class="br">下加密范围<i class="m">(mm)</i></td><td class="v"></td><td><i class="cb"></i></td></tr>
                <tr><td class="n">26</td><td class="br">插筋构造</td><td class="v">纵筋锚固</td><td><i class="cb"></i></td></tr>
                <tr><td class="n">27</td><td class="br">插筋信息</td><td class="v"></td><td><i class="cb"></i></td></tr>
                <tr><td class="n">28</td><td class="br">计算设置</td><td class="v">按默认计算设置计算</td><td></td></tr>
                <tr><td class="n">29</td><td class="br">节点设置</td><td class="v">按默认节点设置计算</td><td></td></tr>
                <tr><td class="n">30</td><td class="br">搭接设置</td><td class="v">按默认搭接设置计算</td><td></td></tr>
                <tr class="cur"><td class="n">31</td><td class="br">顶标高<i class="m">(m)</i></td><td class="v">层顶标高</td><td><i class="cb"></i></td></tr>
                <tr><td class="n">32</td><td class="br end">底标高<i class="m">(m)</i></td><td class="v">基础底标高</td><td><i class="cb"></i></td></tr>
                <tr><td class="n"></td><td class="nm g"><i class="ex">+</i>锚固搭接</td><td class="v"></td><td></td></tr>
              </tbody>
            </table>
            <div class="grid-down">﹀</div>
          </div>
        </div>
      </div>
    </section>

    <div class="cad">
      <svg class="cadsvg" viewBox="898 92 467 590" width="467" height="590">
        <rect x="898" y="92" width="467" height="590" fill="#000"/>
        <path d="M1366 154.500H961.500V566.500H1366" fill="none" stroke="#fff"/>
        <path d="M1366 165.500H971V556.500H1366" fill="none" stroke="#00ffff" stroke-width="2"/>
        <g fill="#00ffff">
          <circle cx="974.500" cy="169.500" r="4.800"/><circle cx="1105.500" cy="169.500" r="4.800"/><circle cx="1236.500" cy="169.500" r="4.800"/><circle cx="1362" cy="169.500" r="4.800"/>
          <circle cx="974.500" cy="318.500" r="4.800"/><circle cx="1362" cy="318.500" r="4.800"/>
          <circle cx="974.500" cy="433.500" r="4.800"/><circle cx="1362" cy="433.500" r="4.800"/>
          <circle cx="974.500" cy="551.500" r="4.800"/><circle cx="1105.500" cy="551.500" r="4.800"/><circle cx="1236.500" cy="551.500" r="4.800"/><circle cx="1362" cy="551.500" r="4.800"/>
        </g>
        <path d="M1345 179l13-11M1352 186l14-11" stroke="#00ffff" stroke-width="1.500"/>
        <path d="M1178.500 126V645" stroke="#fff" stroke-dasharray="13 3 2 3"/>
        <path d="M927 380.500H1366" stroke="#fff" stroke-dasharray="13 3 2 3"/>
        <path d="M961.500 595V631M962 611.500H1044M1106 611.500H1176M1180 611.500H1253M1315 611.500H1366" stroke="#fff" fill="none"/>
        <path d="M962 611.500l19-7v14zM1176 611.500l-19-7v14zM1180 611.500l18-7v14zM1366 604l-9 0v15l9-3z" fill="#fff"/>
        <text class="dimt" x="1075" y="626">200</text>
        <text class="dimt" x="1284" y="626">200</text>
      </svg>
    </div>
  </main>

  <footer class="status">
    <span class="st s0"></span>
    <span class="st s1">层高<i class="m">:2.15m</i></span>
    <span class="st s2">底标高<i class="m">:-2.2m</i></span>
    <span class="st s3"><i class="m">0</i></span>
    <span class="st s4">缺省为当前楼层顶标高</span>
    <span class="st s5"><i class="m">334.5 FPS</i></span>
  </footer>

  <div class="taskbar">
    <div class="start"><svg class="winic"><use href="#win"/></svg></div>
    <div class="tsearch"><i class="cortana"></i><span>在这里输入你要搜索的内容</span><svg class="micg"><use href="#micg"/></svg></div>
    <div class="tapps">
      <span class="ta"><svg class="tasks"><use href="#tasks"/></svg></span>
      <span class="ta"><svg class="tai"><use href="#fan"/></svg></span>
      <span class="ta"><svg class="tai"><use href="#ie"/></svg></span>
      <span class="ta"><svg class="tai"><use href="#swirl"/></svg></span>
      <span class="ta"><svg class="tai"><use href="#edge"/></svg></span>
      <span class="ta"><svg class="tai"><use href="#ie2"/></svg></span>
      <span class="ta"><svg class="tai"><use href="#folder"/></svg></span>
      <span class="ta run"><svg class="tai"><use href="#glodon"/></svg></span>
      <span class="ta run"><svg class="tai"><use href="#gball"/></svg></span>
      <span class="ta run"><svg class="tai"><use href="#note"/></svg></span>
      <span class="ta run act"><svg class="tai"><use href="#logo"/></svg></span>
    </div>
    <div class="tray">
      <span class="t-link">链接</span>
      <span class="t-cpu"><span>11%</span><span>CPU使用</span></span>
      <span class="t-ic t-up"><svg viewBox="0 0 12 8" class="caret"><path d="M1 7l5-6 5 6" fill="none" stroke="#fff"/></svg></span>
      <span class="t-ic"><svg class="tri"><use href="#batt"/></svg></span>
      <span class="t-ic"><svg class="tri"><use href="#wifi"/></svg></span>
      <span class="t-ic"><svg class="tri"><use href="#vol"/></svg></span>
      <span class="t-kb"><svg class="trk"><use href="#kbd"/></svg></span>
      <span class="t-ying">英</span>
      <span class="t-s"><svg class="sogou" viewBox="0 0 28 28"><rect x="2" y="2" width="24" height="24" rx="4" transform="rotate(-12 14 14)" fill="#ee5522"/><text class="stext" x="14" y="22">S</text></svg></span>
      <span class="t-clock"><span>12:02</span><span>2018/7/6</span></span>
      <span class="t-notif"><svg class="nf"><use href="#notif"/></svg></span>
    </div>
  </div>
</div>

<svg class="redring" viewBox="0 0 440 110" width="440" height="110"><path fill-rule="evenodd" fill="#ff0000" d="M0 55a210 47 0 1 0 420 0a210 47 0 1 0-420 0zM9 55a201 41 0 1 0 402 0a201 41 0 1 0-402 0z"/></svg>

<div class="ball"><span>70</span></div>

<div class="ime">
  <svg class="imes" viewBox="0 0 28 28"><rect x="2" y="2" width="24" height="24" rx="4" transform="rotate(-12 14 14)" fill="#f0501e"/><text class="stext" x="14" y="22">S</text></svg>
  <div class="imebar">
    <span class="imey">英</span><span class="imep">•,</span>
    <svg class="imei"><use href="#smile"/></svg>
    <svg class="imei"><use href="#micb"/></svg>
    <svg class="imei"><use href="#kbb"/></svg>
    <svg class="imei"><use href="#pers"/></svg>
    <svg class="imei"><use href="#shirt"/></svg>
    <svg class="imei"><use href="#wrench"/></svg>
  </div>
</div>
</body>
</html>
```
FILE: styles.css
```css
* { box-sizing: border-box; }
html, body { margin: 0; padding: 0; width: 1366px; height: 768px; overflow: hidden; }
body { font: 12px/16px "Open Sans", "Noto Sans CJK SC", sans-serif; color: #111; background: #f0f0f0; position: relative; }
i { font-style: normal; }
.defs { position: absolute; }
.m { font-family: "Liberation Mono", "Noto Sans CJK SC", monospace; font-size: 12px; letter-spacing: -1.2px; line-height: 1; }
.ic { width: 15px; height: 15px; flex: none; display: block; }
.app { display: flex; flex-direction: column; width: 1366px; height: 768px; }

/* title */
.title { height: 23px; background: #fff; display: flex; align-items: center; padding-left: 2px; flex: none; }
.tlogo { width: 16px; height: 16px; flex: none; }
.ttext { margin-left: 5px; white-space: nowrap; font-size: 12.550px; }
.wbtns { margin-left: auto; display: flex; align-items: center; }
.wmin { width: 10px; height: 1px; background: #222; margin-right: 35px; }
.wmax { width: 10px; height: 10px; border: 1px solid #222; margin-right: 36px; box-shadow: 2px -2px 0 -1px #fff, 2px -2px 0 0 #222; }
.wclose { width: 13px; height: 12px; margin-right: 17px; }

/* menu */
.menu { height: 31px; flex: none; display: flex; background: #f5f5f5; align-items: center; font-size: 12px; }
.menu-l { width: 937px; display: flex; align-items: center; gap: 11.500px; padding-left: 7px; white-space: nowrap; }
.mchg { margin-left: 2px; width: 13px; height: 13px; }
.mchgt { margin-left: -6.500px; }
.mxiao { margin-left: 11.500px; }
.mxiaot { margin-left: -6.500px; }
.menu-news { width: 188px; height: 31px; background: #fff; padding-left: 29px; line-height: 31px; color: #6b3a06; white-space: nowrap; }
.menu-user { flex: 1; height: 31px; display: flex; align-items: center; padding-left: 5px; background: linear-gradient(#fafafa, #efefef); position: relative; }
.uic { width: 17px; height: 17px; }
.phone { margin-left: 3px; font-size: 12.400px; }
.bean { margin-left: 8px; }
.bell { width: 13px; height: 16px; margin-left: 10px; }
.mu { position: absolute; right: 0; top: 0; }

/* toolbars */
.tbar { height: 29px; flex: none; display: flex; white-space: nowrap; gap: 3px; background: #fff; }
.seg { display: flex; align-items: center; background: linear-gradient(#fbfbfb, #ececec); position: relative; height: 29px; gap: 8px; }
.sega { width: 150px; padding-left: 5px; gap: 0; }
.segb { width: 547px; padding-left: 5px; }
.segc { flex: 1; padding-left: 2px; gap: 7px; }
.segc .vs-r { margin-right: -1px; }
.a1 { margin-left: 7px; }
.a2 { margin-left: 6px; }
.a3 { margin: 0 8px 0 6px; }
.a4 { margin-right: 0; }
.it { display: flex; align-items: center; gap: 4px; }
.off { color: #a2a2a2; }
.sigma { width: 15px; text-align: center; font-size: 13px; color: #000; }
.more { position: absolute; right: 3px; top: 0; font: bold 13px/15px "Liberation Sans", sans-serif; color: #111; }
.dd { width: 0; height: 0; flex: none; border-style: solid; border-width: 4px 3.500px 0; border-color: #888 transparent transparent; margin-left: 5px; }
.dk { border-top-color: #222; }
.dn { margin-left: 2px; }
.dsm { margin-left: -1px; }
.dsm2 { margin-left: -2.500px; }
.vsep { width: 1px; height: 19px; flex: none; background: #a8a8a8; }
.vs-r { margin-right: -2px; }
.vs-b { margin: 0 -2.500px 0 -4px; }
.vs-c { margin: 0 -3px 0 -2px; }
.combo { width: 62px; height: 24px; margin-right: -3px; border: 1px solid #777; display: flex; align-items: center; padding-left: 2px; gap: 5px; }
.combo-sw { width: 16px; height: 11px; background: #e6e6e6; border: 1px solid #ccc; }

/* main */
.main { height: 624px; flex: none; display: flex; position: relative; }
.nav { width: 165px; flex: none; padding-top: 1px; display: flex; flex-direction: column; }
.navhead { height: 15px; background: #0947d6; color: #fff; font-size: 13px; line-height: 15px; display: flex; justify-content: space-between; white-space: nowrap; }
.navpin { display: flex; gap: 14px; padding: 3px 4px 0 0; }
.pin { width: 9px; height: 9px; }
.navbtn { height: 22px; margin-top: 1px; background: #f0f0f0; border: 1px solid #a0a0a0; border-top: 1px solid #b0b0b0; text-align: center; line-height: 21px; font-size: 12px; flex: none; }
.navtools { height: 27px; flex: none; display: flex; align-items: center; gap: 7px; padding-left: 7px; margin-top: 1px; background: linear-gradient(#fafafa, #f0f0f0); border-top: 1px solid #ddd; }
.navtools .ic { width: 16px; height: 16px; }
.navtree { height: 487px; margin: 0 2px; flex: none; background: #fff; border: 1px solid #a0a0a0; display: flex; position: relative; }
.nb2 { margin-top: 1px; }
.navlist { width: 143px; flex: none; position: relative; overflow: hidden; padding-top: 1px; }
.navlist::before { content: ""; position: absolute; left: 12px; top: 16px; height: 370px; border-left: 1px dotted #555; }
.r, .c { display: flex; align-items: center; height: 16px; position: relative; white-space: nowrap; }
.chev { width: 10px; height: 10px; flex: none; margin-left: 6px; background: #fff; position: relative; }
.folder { width: 16px; height: 14px; flex: none; margin-left: 7px; margin-right: 5px; }
.r::after { content: ""; position: absolute; left: 19px; top: 8px; width: 3px; border-top: 1px dotted #555; }
.nog::before { content: ""; position: absolute; left: 0; top: 0; width: 11px; height: 16px; background: #fff; }
.nog .chev { z-index: 1; }
.c { margin-left: 40px; padding: 0 3px; gap: 5px; width: fit-content; }
.c::before { content: ""; position: absolute; left: -9px; top: 0; height: 16px; border-left: 1px dotted #555; }
.c.last::before { height: 9px; }
.c::after { content: ""; position: absolute; left: -9px; top: 8px; width: 11px; border-top: 1px dotted #555; }
.sel { background: #d9d9d9; }
.colsic { margin-left: -4px; }
.sbar { width: 15px; flex: none; display: flex; flex-direction: column; background: #f0f0f0; margin: 0 1px 1px 0; }
.sb-arrow { height: 16px; flex: none; font-size: 10px; line-height: 16px; text-align: center; font-weight: bold; color: #555; background: #f0f0f0; }
.sb-down { line-height: 20px; }
.sb-light { background: #f0f0f0; flex: none; }
.sb-thumb { background: #c8c8c8; flex: none; }
.sb-grow { flex: 1; }
.sb-nav-a { height: 113px; }
.sb-comp-t { height: 210px; }

/* work */
.work { flex: 1; display: flex; flex-direction: column; min-width: 0; padding-left: 6px; }
.tbar2 { height: 28px; flex: none; display: flex; align-items: center; gap: 7.500px; padding-left: 4px; white-space: nowrap; background: linear-gradient(#fafafa, #efefef); }
.floor { margin-left: -5px; }
.fbox { width: 63px; height: 24px; margin-left: -1.500px; background: #fff; display: flex; align-items: center; padding-left: 2px; }
.fbox .dd { margin-left: 13px; }
.workbody { flex: 1; display: flex; min-height: 0; }
.comp { width: 182px; flex: none; padding-left: 1px; display: flex; flex-direction: column; }
.search { height: 31px; flex: none; display: flex; align-items: center; padding-top: 5px; }
.sbox { width: 156px; height: 24px; background: #fff; border: 1px solid #8a8a8a; color: #8a8a8a; padding-left: 2px; line-height: 21px; font-size: 12px; }
.smag { margin-left: 5px; }
.ctree { width: 181px; height: 563px; flex: none; background: #fff; border: 1px solid #a0a0a0; border-top-width: 2px; display: flex; }
.clist { width: 163px; flex: none; overflow: hidden; position: relative; }
.clist::before { content: ""; position: absolute; left: 30px; top: 16px; height: 548px; border-left: 1px dotted #555; }
.croot { height: 16px; display: flex; align-items: center; margin-top: 1px; position: relative; background: #fff; z-index: 1; }
.croot .chev { margin-left: 5px; margin-right: 8px; }
.croot span { margin-left: 6px; }
.k { height: 16px; display: flex; align-items: center; position: relative; padding-left: 42px; }
.k::before { content: ""; position: absolute; left: 30px; top: 8px; width: 11px; border-top: 1px dotted #555; }
.gear { width: 11px; height: 11px; flex: none; position: relative; }
.kt { margin-left: 8px; padding: 0 1px; white-space: nowrap; }
.ksel .kt { background: #2a6fcc; width: 28px; height: 16px; line-height: 16px; }
.ksel { background: linear-gradient(90deg, transparent 39px, #cce4f7 39px, #cce4f7 90px, transparent 90px); }

/* props */
.props { flex: 1; min-width: 0; padding-left: 7px; background: #fff; border-left: 1px solid #a8a8a8; margin-left: 5px; display: flex; flex-direction: column; }
.tabs { height: 22px; flex: none; border-bottom: 1px solid #c4c4c4; margin-left: -7px; padding-left: 1px; }
.tab { display: block; width: 62px; height: 22px; background: #fff; border: 1px solid #c4c4c4; border-bottom: 0; border-top: 0; text-align: center; line-height: 20px; font-size: 12px; }
.grid { height: 566px; flex: none; margin: 4px 5px 0 -3px; border: 1px solid #a8a8a8; overflow: hidden; position: relative; background: #fff; }
.grid-down { position: absolute; right: 3px; bottom: 0; width: 15px; height: 16px; font-size: 10px; line-height: 18px; text-align: center; font-weight: bold; color: #555; background: #eee; }
.pt { border-collapse: separate; border-spacing: 0; table-layout: fixed; width: 369px; }
.c1 { width: 22px; } .c2 { width: 190px; } .c3 { width: 127px; } .c4 { width: 30px; }
.pt th { height: 23px; padding: 3px 0 0; font-weight: normal; line-height: 14px; background: linear-gradient(#fcfcfc, #ececec); border-right: 1px solid #c0c0c0; border-bottom: 1px solid #c0c0c0; font-size: 12px; }
.pt .hval { background: linear-gradient(#fbe0ac, #f2c26c); color: #800080; }
.pt td { box-sizing: border-box; height: 19px; padding: 0; line-height: 14px; vertical-align: middle; border-right: 1px solid #c4c4c4; border-bottom: 1px solid #c4c4c4; white-space: nowrap; overflow: hidden; position: relative; text-align: center; }
.pt td.n { background: linear-gradient(#fbfbfb, #ececec); font: 12px/14px "Liberation Mono", monospace; letter-spacing: -1.2px; }
.pt td.nm { text-align: left; padding: 2px 0 0 19px; }
.pt td.v { text-align: left; padding-left: 2px; }
.pt td.br { text-align: left; padding: 2px 0 0 29px; }
.b { color: #0000ff; }
.g { color: #808080; }
.cb { display: block; width: 13px; height: 13px; margin: 0 auto; border: 1px solid #333; background: #fff; }
.ex { position: absolute; left: 2px; top: 3px; width: 13px; height: 12px; border: 1px solid #999; color: #111; font: 12px/10px "Liberation Sans", sans-serif; text-align: center; background: #fff; }
.br::before { content: ""; position: absolute; left: 7px; top: 0; height: 19px; border-left: 1px solid #bbb; }
.br::after { content: ""; position: absolute; left: 7px; top: 9px; width: 17px; border-top: 1px solid #bbb; }
.br.end::before { height: 10px; }
.cur .n { background: #fdd9a0 !important; color: #800080; }
.cur .br { background: #0078d7; color: #fff; }
.cur .br::before, .cur .br::after { border-color: #cfe4f7; }
.cur .v { background: #d6e8f8; }

/* cad */
.cad { position: absolute; left: 889px; top: 0; width: 477px; height: 608px; background: #d5e1ef; border-left: 1px solid #555; border-bottom: 1px solid #555; padding: 8px 0 0 8px; }
.cadsvg { display: block; border-top: 1px solid #fff; box-sizing: content-box; }
.dimt { font: 39px "Liberation Serif", serif; fill: #fff; text-anchor: middle; }

/* status */
.status { height: 21px; flex: none; display: flex; gap: 2px; background: #f0f0f0; padding-top: 1px; }
.st { height: 19px; background: #f7f7f7; border: 1px solid #dcdcdc; padding-left: 1px; line-height: 18px; white-space: nowrap; }
.s0 { width: 148px; } .s1 { width: 78px; } .s2 { width: 98px; } .s3 { width: 48px; } .s4 { width: 914px; } .s5 { width: 70px; }

/* taskbar */
.taskbar { height: 40px; flex: none; display: flex; background: #06131a; color: #ddd; }
.start { width: 48px; background: #000; display: flex; align-items: center; justify-content: center; }
.winic { width: 16px; height: 16px; }
.tsearch { width: 344px; background: #333; display: flex; align-items: center; padding-left: 12px; font-size: 14px; color: #8a8a8a; }
.cortana { width: 17px; height: 20px; border: 2.500px solid #ddd; border-radius: 50%; margin-right: 7px; }
.micg { width: 14px; height: 20px; margin-left: auto; margin-right: 14px; }
.tapps { display: grid; grid-template-columns: 49px 51px 51px 52px 50px 48px 48px 50px 48px 48px 47px; }
.ta { display: flex; align-items: center; justify-content: center; position: relative; height: 40px; }
.tai { width: 24px; height: 24px; }
.tasks { width: 22px; height: 18px; }
.run::after { content: ""; position: absolute; left: 5px; right: 5px; bottom: 0; height: 2px; background: #76b9ed; }
.act { background: #37444a; }
.act::after { left: 0; right: 0; }
.tray { flex: 1; display: flex; align-items: center; height: 40px; color: #e4e4e4; }
.t-link { width: 50px; text-align: center; }
.t-cpu { width: 66px; display: flex; flex-direction: column; align-items: center; line-height: 17px; }
.t-ic { width: 24px; display: flex; justify-content: center; }
.caret { width: 12px; height: 8px; }
.tri { width: 20px; height: 18px; }
.t-kb { width: 32px; display: flex; justify-content: center; }
.trk { width: 23px; height: 16px; }
.t-ying { width: 24px; text-align: center; font-size: 14px; }
.t-s { width: 28px; display: flex; justify-content: center; }
.sogou { width: 20px; height: 20px; }
.stext { font: bold italic 24px "Liberation Sans", sans-serif; fill: #fff; text-anchor: middle; }
.t-clock { width: 84px; display: flex; flex-direction: column; align-items: center; line-height: 18px; }
.t-notif { width: 30px; display: flex; justify-content: center; }
.nf { width: 16px; height: 18px; }

/* overlays */
.redring { position: absolute; left: 332px; top: 620px; shape-rendering: crispEdges; }
.ball { position: absolute; left: 1008px; top: -28px; width: 48px; height: 48px; border-radius: 50%; background: #3dba52; border: 2px solid #d8e8d8; box-shadow: 0 1px 3px #888; color: #fff; font: bold 12px/14px "Open Sans", sans-serif; text-align: center; padding-top: 27px; }
.ime { position: absolute; left: 736px; top: 11px; display: flex; align-items: flex-start; }
.imes { width: 30px; height: 28px; position: relative; z-index: 1; }
.imebar { width: 178px; height: 24px; margin: 3px 0 0 -1px; background: #fff; border: 1px solid #b8d0e6; display: flex; align-items: center; padding-left: 3px; gap: 6px; }
.imey { font-weight: bold; font-size: 13px; color: #1d72c9; margin-left: 4px; }
.imep { color: #1d72c9; font-weight: bold; width: 16px; }
.imei { width: 16px; height: 16px; flex: none; }
```
